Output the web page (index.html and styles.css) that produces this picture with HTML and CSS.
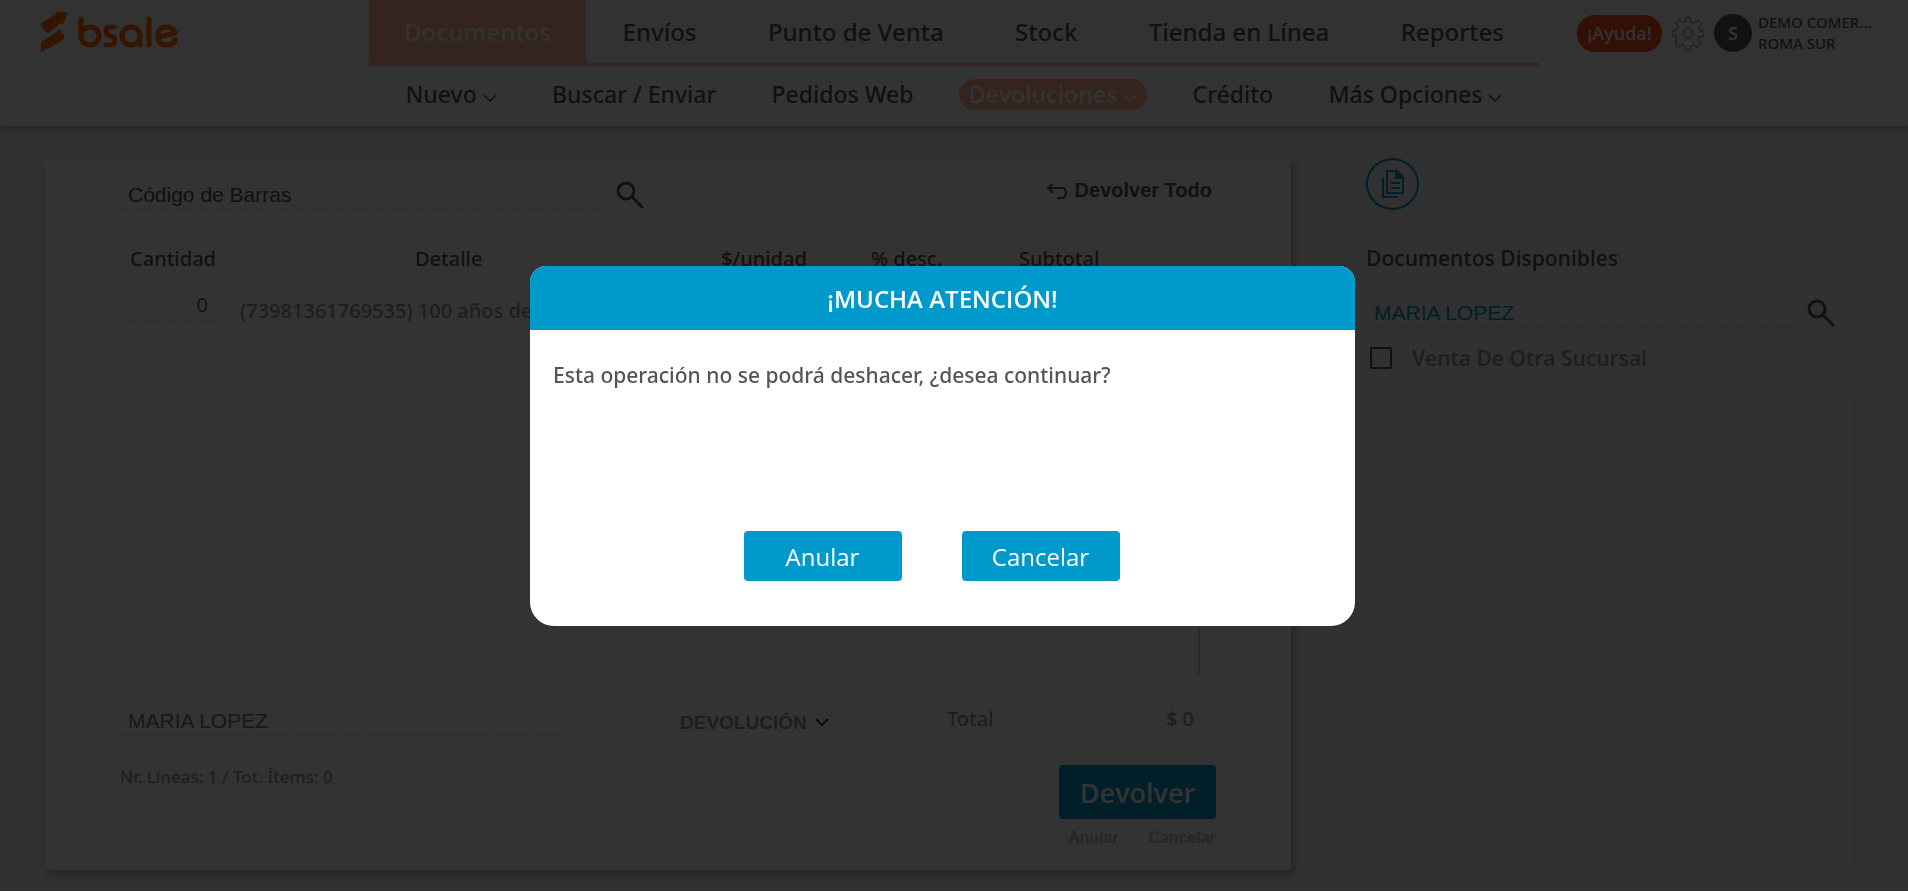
FILE: index.html
```
<!DOCTYPE html>
<html lang="es">
<head>
    <meta charset="utf-8">
    <title>bsale - Devoluciones</title>
    <meta name="viewport" content="width=device-width, initial-scale=1.0">
    <link rel="stylesheet" href="styles.css">
</head>
<body>
    <header class="header">
        <div class="topbar">
            <a class="logo" href="#" aria-label="bsale">
                <svg width="140" height="42" viewBox="0 0 140 42">
                    <g fill="#ff6900">
                        <path d="M1 12 L17 3 L16 0 L28 2 L23 13 L21 12 L8 22 Q1 18 1 12Z"/>
                        <path d="M1 41 V31 L17 21 L18 18 Q24 22 24 26 Q24 29 20 31Z"/>
                    </g>
                    <g fill="none" stroke="#ff6900" stroke-width="5" stroke-linecap="round" stroke-linejoin="round">
                        <path d="M41 8 V25"/>
                        <circle cx="50" cy="25" r="9"/>
                        <path d="M74 16 H70 Q66 16 66 20 Q66 24 70 25 Q75 25 75 29 Q75 34 71 34 H66"/>
                        <circle cx="91" cy="25" r="9"/>
                        <path d="M100 25 V34"/>
                        <path d="M109 8 V34"/>
                        <path d="M119 26 L135 22 Q133 16 127 16 Q118 16 118 25 Q118 34 127 34 Q133 34 135 29"/>
                    </g>
                </svg>
            </a>
            <nav class="menu">
                <a class="active" href="#">Documentos</a>
                <a href="#">Envíos</a>
                <a href="#">Punto de Venta</a>
                <a href="#">Stock</a>
                <a href="#">Tienda en Línea</a>
                <a href="#">Reportes</a>
            </nav>
            <div class="user">
                <a class="help" href="#">¡Ayuda!</a>
                <a class="gear" href="#" aria-label="Configuración">
                    <svg width="32" height="34" viewBox="0 0 32 34" fill="none" stroke="#777" stroke-width="1">
                        <path d="M14 1h4l1 5 3 1 4-3 4 4-3 4 1 3 4 1v4l-5 1-1 3 3 4-4 3-4-2-2 1-1 4h-4l-1-4-3-2-4 3-3-4 2-4-1-3-4-1v-4l4-1 2-3-2-4 3-3 4 2 3-1z"/>
                        <circle cx="16" cy="17" r="5"/>
                    </svg>
                </a>
                <span class="avatar">S</span>
                <div class="account">
                    <div>DEMO COMER...</div>
                    <div>ROMA SUR</div>
                </div>
            </div>
        </div>
        <nav class="submenu">
            <a href="#">Nuevo <svg class="chevron" viewBox="0 0 14 9"><path d="M1 1l6 6 6-6"/></svg></a>
            <a href="#">Buscar / Enviar</a>
            <a href="#">Pedidos Web</a>
            <a class="active" href="#">Devoluciones <svg class="chevron" viewBox="0 0 14 9"><path d="M1 1l6 6 6-6"/></svg></a>
            <a href="#">Crédito</a>
            <a href="#">Más Opciones <svg class="chevron" viewBox="0 0 14 9"><path d="M1 1l6 6 6-6"/></svg></a>
        </nav>
    </header>

    <main class="page">
        <section class="card">
            <div class="card-top">
                <input class="line-input barcode" type="text" placeholder="Código de Barras" aria-label="Código de Barras">
                <button class="icon-button" aria-label="Buscar">
                    <svg width="28" height="28" viewBox="0 0 28 28" fill="none" stroke="#555" stroke-width="3" stroke-linecap="round"><circle cx="10" cy="10" r="8"/><path d="M16 16l10 10"/></svg>
                </button>
                <button class="return-all">
                    <svg width="20" height="16" viewBox="0 0 20 16" fill="none" stroke="#555" stroke-width="2"><path d="M6 1L1 5l5 5M1 5h13q5 0 5 5t-5 5h-4"/></svg>
                    Devolver Todo
                </button>
            </div>

            <div class="table-wrap">
                <table>
                    <thead>
                        <tr>
                            <th class="qty">Cantidad</th>
                            <th class="detail">Detalle</th>
                            <th class="price">$/unidad</th>
                            <th class="discount">% desc.</th>
                            <th>Subtotal</th>
                        </tr>
                    </thead>
                    <tbody>
                        <tr>
                            <td><input class="line-input qty-input" type="text" value="0" aria-label="Cantidad"></td>
                            <td class="product" colspan="4">(73981361769535) 100 años de soledad</td>
                        </tr>
                    </tbody>
                </table>
            </div>

            <div class="summary">
                <input class="line-input client" type="text" value="MARIA LOPEZ" aria-label="Cliente">
                <div class="select-wrap">
                    <select aria-label="Tipo de documento">
                        <option>DEVOLUCIÓN</option>
                    </select>
                    <svg class="chevron" viewBox="0 0 14 9"><path d="M1 1l6 6 6-6"/></svg>
                </div>
                <span class="total-label">Total</span>
                <span class="total">$ 0</span>
            </div>

            <div class="card-bottom">
                <p class="count">Nr. Líneas: 1 / Tot. Ítems: 0</p>
                <div class="actions">
                    <button class="submit">Devolver</button>
                    <div class="links">
                        <a href="#">Anular</a>
                        <a href="#">Cancelar</a>
                    </div>
                </div>
            </div>
        </section>

        <aside class="side">
            <button class="docs-button" aria-label="Documentos">
                <svg width="24" height="30" viewBox="0 0 24 30" fill="none" stroke="#0099cc" stroke-width="2">
                    <path d="M6 2h10l6 6v16H6z"/>
                    <path d="M15 2v7h7z" fill="#0099cc"/>
                    <path d="M10 14h9M10 19h9M2 9v19h15"/>
                </svg>
            </button>
            <h2>Documentos Disponibles</h2>
            <div class="side-search">
                <input class="line-input" type="text" value="MARIA LOPEZ" aria-label="Buscar cliente">
                <button class="icon-button" aria-label="Buscar">
                    <svg width="28" height="28" viewBox="0 0 28 28" fill="none" stroke="#555" stroke-width="3" stroke-linecap="round"><circle cx="10" cy="10" r="8"/><path d="M16 16l10 10"/></svg>
                </button>
            </div>
            <label class="check">
                <input type="checkbox">
                Venta De Otra Sucursal
            </label>
            <div class="side-list"></div>
        </aside>
    </main>

    <div class="overlay">
        <div class="modal" role="dialog" aria-modal="true" aria-labelledby="modal-title">
            <h1 id="modal-title">¡MUCHA ATENCIÓN!</h1>
            <div class="modal-body">
                <p>Esta operación no se podrá deshacer, ¿desea continuar?</p>
                <div class="modal-buttons">
                    <button>Anular</button>
                    <button>Cancelar</button>
                </div>
            </div>
        </div>
    </div>
</body>
</html>
```

FILE: styles.css
```
:root {
    --blue: #0099cc;
    --orange: #ffb491;
    --text: #555;
    --muted: #969696;
    --line: #d2d2d2;
}

* {
    box-sizing: border-box;
}

body {
    margin: 0;
    min-height: 100vh;
    display: flex;
    flex-direction: column;
    font-family: "Noto Sans", "Open Sans", sans-serif;
    font-weight: 500;
    color: var(--text);
    background: #f3f3f3;
    border-bottom: 1px solid #e6d2dc;
}

a {
    color: inherit;
    text-decoration: none;
}

button,
input,
select {
    padding: 0;
    border: none;
    background: none;
    color: inherit;
    font: inherit;
}

button {
    cursor: pointer;
}

/* Header */
.header {
    background: #fff;
    box-shadow: 0 3px 6px rgba(0, 0, 0, 0.3);
}

.topbar {
    display: grid;
    grid-template-columns: 1fr 1170px 1fr;
    height: 63px;
    background: #fafafa;
}

.logo {
    padding: 11px 0 0 40px;
}

.menu {
    display: flex;
    justify-content: space-between;
    height: 66px;
    border-bottom: 3px solid var(--orange);
    font-size: 24px;
    line-height: 64px;
}

.menu a {
    padding: 0 35px;
    white-space: nowrap;
}

.menu .active {
    background: var(--orange);
    color: #fafafa;
    font-family: "Open Sans", sans-serif;
    font-weight: 600;
}

.user {
    display: flex;
    align-items: center;
    padding-left: 38px;
}

.help {
    width: 85px;
    border-radius: 18px;
    background: #ff5019;
    color: #fafafa;
    font-family: "Open Sans", sans-serif;
    font-size: 18px;
    font-weight: 600;
    line-height: 37px;
    text-align: center;
}

.gear {
    height: 34px;
    margin: 0 10px;
}

.avatar {
    width: 38px;
    border-radius: 50%;
    background: var(--text);
    color: #fafafa;
    font-size: 18px;
    font-weight: 600;
    line-height: 38px;
    text-align: center;
}

.account {
    margin-left: 6px;
    font-size: 15px;
    line-height: 21px;
    white-space: nowrap;
}

.submenu {
    display: flex;
    justify-content: space-between;
    width: 1117px;
    height: 63px;
    margin: 0 auto;
    align-items: center;
    font-size: 23px;
    line-height: 31px;
}

.submenu a {
    padding: 0 10px;
    white-space: nowrap;
}

.submenu .active {
    border-radius: 16px;
    background: var(--orange);
    color: #fff;
    font-family: "Open Sans", sans-serif;
    font-weight: 600;
}

.chevron {
    width: 14px;
    height: 9px;
    fill: none;
    stroke: currentColor;
    stroke-width: 1.5;
}

/* Return form */
.page {
    flex: 1;
    display: grid;
    grid-template-columns: 1246fr 489fr;
    gap: 75px;
    padding: 32px 53px 20px 45px;
}

.card {
    display: flex;
    flex-direction: column;
    padding: 16px 75px 22px;
    background: #fff;
    box-shadow: 3px 4px 8px rgba(0, 0, 0, 0.3);
}

.line-input {
    height: 36px;
    padding: 6px 8px 0;
    border-bottom: 1px dashed var(--line);
    font-family: "Liberation Sans", Arial, sans-serif;
    font-size: 21px;
    font-weight: 400;
    outline: none;
}

.line-input::placeholder {
    color: var(--text);
    opacity: 1;
}

.card-top {
    display: flex;
    align-items: flex-end;
}

.barcode {
    width: 490px;
    margin-right: 6px;
}

.icon-button {
    height: 29px;
}

.return-all {
    display: flex;
    align-items: center;
    gap: 8px;
    margin: 0 4px 8px auto;
    font-family: "Liberation Sans", Arial, sans-serif;
    font-size: 20px;
    font-weight: 700;
}

.table-wrap {
    height: 435px;
    margin: 30px 16px 0 0;
}

table {
    width: 100%;
    height: 100%;
    border-collapse: collapse;
    font-size: 20px;
}

th {
    height: 38px;
    padding: 0;
    line-height: 38px;
    font-weight: 500;
    text-align: left;
}

.qty {
    width: 120px;
    padding-left: 10px;
}

.detail {
    width: 481px;
    padding-left: 175px;
}

.price {
    width: 150px;
}

.discount {
    width: 148px;
}

td {
    padding: 8px 0 0;
    vertical-align: top;
}

.qty-input {
    width: 99px;
    margin-left: 3px;
    padding: 2px 14px 0;
    font-family: "Open Sans", sans-serif;
    font-size: 20px;
    text-align: right;
}

.product {
    padding-top: 19px;
    border-right: 2px solid var(--line);
    color: var(--muted);
}

.summary {
    display: flex;
    align-items: center;
    margin-top: 25px;
    color: var(--muted);
    font-size: 20px;
}

.client {
    width: 439px;
    margin-right: 121px;
    color: #777;
}

.select-wrap {
    display: flex;
    align-items: center;
    gap: 8px;
    width: 267px;
    padding-top: 8px;
}

select {
    appearance: none;
    font-family: "Liberation Sans", Arial, sans-serif;
    font-size: 19px;
    font-weight: 700;
}

.select-wrap .chevron {
    color: #333;
    stroke-width: 2;
}

.total {
    margin: 0 22px 0 auto;
}

.card-bottom {
    display: flex;
    justify-content: space-between;
    margin-top: 29px;
}

.count {
    margin: 0;
    color: var(--muted);
    font-size: 17px;
}

.submit {
    width: 157px;
    height: 54px;
    border-radius: 4px;
    background: var(--blue);
    color: #fff;
    font-family: "Open Sans", sans-serif;
    font-size: 27px;
    font-weight: 600;
}

.links {
    display: flex;
    justify-content: space-between;
    margin-top: 10px;
    padding-left: 9px;
    color: #bebebe;
    font-family: "Liberation Sans", Arial, sans-serif;
    font-size: 16px;
    font-weight: 700;
}

/* Documents panel */
.side {
    display: flex;
    flex-direction: column;
    align-items: flex-start;
    font-family: "Open Sans", sans-serif;
}

.docs-button {
    display: flex;
    align-items: center;
    justify-content: center;
    width: 53px;
    height: 52px;
    border: 2px solid var(--blue);
    border-radius: 50%;
}

h2 {
    margin: 34px 0 0;
    font-size: 21px;
    font-weight: 600;
    line-height: 28px;
}

.side-search {
    display: flex;
    align-items: flex-end;
    width: 469px;
    margin-top: 20px;
}

.side-search .line-input {
    flex: 1;
    margin-right: 14px;
    color: var(--blue);
}

.check {
    display: flex;
    align-items: center;
    gap: 20px;
    margin: 16px 0 0 4px;
    color: var(--muted);
    font-size: 21px;
    font-weight: 600;
}

.check input {
    appearance: none;
    width: 22px;
    height: 22px;
    margin: 0;
    border: 2px solid var(--text);
    border-radius: 2px;
}

.side-list {
    flex: 1;
    width: 100%;
    margin-top: 24px;
    border-right: 2px solid #e6e6e6;
}

/* Modal */
.overlay {
    position: fixed;
    inset: 0;
    display: flex;
    align-items: flex-start;
    justify-content: center;
    padding: 266px 23px 0 0;
    background: rgba(0, 0, 0, 0.8);
}

.modal {
    width: 825px;
    border-radius: 16px 16px 24px 24px;
    background: #fff;
    overflow: hidden;
}

h1 {
    margin: 0;
    padding-top: 2px;
    background: var(--blue);
    color: #fff;
    font-family: "Open Sans", sans-serif;
    font-size: 24px;
    font-weight: 600;
    line-height: 62px;
    text-align: center;
}

.modal-body {
    padding: 30px 45px 45px 23px;
}

.modal-body p {
    margin: 0;
    font-size: 21px;
    line-height: 30px;
}

.modal-buttons {
    display: flex;
    justify-content: center;
    gap: 60px;
    margin-top: 141px;
}

.modal-buttons button {
    width: 158px;
    height: 50px;
    border-radius: 4px;
    background: var(--blue);
    color: #fff;
    font-family: "Open Sans", sans-serif;
    font-size: 24px;
}
```
